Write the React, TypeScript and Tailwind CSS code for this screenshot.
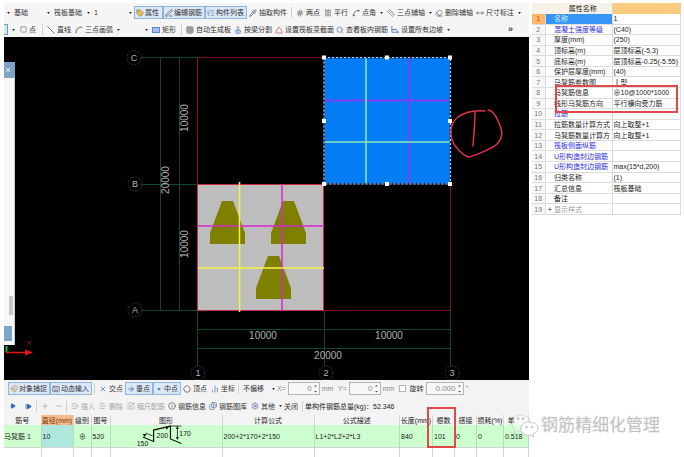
import React from 'react';
import clsx from 'clsx';
import {
  Tag, PenLine, ListTree, Pipette, Hash, Pause, Spline, Ruler, Eraser, MoveHorizontal, Slash,
  Grid3x3, Stamp, Triangle, Search, Square, Magnet, Keyboard, X, ArrowRight, Dot, Pentagon, ChartNoAxesColumn,
  Play, StepForward, Plus, Minus, ListPlus, ListMinus, Scaling, Info, Images, Settings,
} from 'lucide-react';

interface ToolProps {
  icon?: React.ReactNode;
  label?: string;
  width: string;
  active?: boolean;
  muted?: boolean;
  menu?: boolean;
}

const Caret: React.FC<{ className?: string }> = ({ className }) => (
  <svg viewBox="0 0 4 3" className={clsx('h-[2px] w-[3px] shrink-0', className)} aria-hidden="true">
    <path d="M0 0h4L2 3z" fill="#222" />
  </svg>
);

const Tool: React.FC<ToolProps> = ({ icon, label, width, active, muted, menu }) => (
  <button
    type="button"
    className={clsx(
      'flex h-[13px] shrink-0 items-center whitespace-nowrap',
      width,
      active ? 'gap-px border border-[#8fb4de] bg-[#dbe8f7] pl-px' : 'gap-[2px] pl-[2px]',
      muted ? 'text-[#a3a3a3]' : 'text-[#333]',
    )}
  >
    {icon}
    {label}
    {menu && <Caret className="ml-[2px]" />}
  </button>
);

const Picker: React.FC<{ label: string; value: string; width: string }> = ({ label, value, width }) => (
  <div className={clsx('relative flex shrink-0 items-center', width)}>
    <select aria-label={label} className="w-full appearance-none bg-transparent pl-[2px] leading-[13px] text-[#333] outline-none">
      {value && <option>{value}</option>}
    </select>
    <Caret className="pointer-events-none absolute right-[2px] top-[6px]" />
  </div>
);

const Spin: React.FC<{ label: string; value: string; width: string; unit: string; strong?: boolean }> = ({ label, value, width, unit, strong }) => (
  <label className="flex shrink-0 items-center gap-[2px] text-[#8a8a8a]">
    <span className={strong ? 'text-[#333]' : ''}>{label}</span>
    <span className={clsx('flex h-[13px] items-center border border-[#b5b5b5] bg-[#f7f7f7]', width)}>
      <input defaultValue={value} className="w-full min-w-0 bg-transparent text-right text-[8px] outline-none" />
      <svg viewBox="0 0 7 11" className="h-[11px] w-[7px] shrink-0" aria-hidden="true">
        <path d="M2 3.500h3L3.500 2zM2 8h3L3.500 9.500z" fill="#555" />
      </svg>
    </span>
    <span className="w-3">{unit}</span>
  </label>
);

const Divider = () => <span className="mx-[2px] h-[11px] w-px shrink-0 bg-[#d0d0d0]" />;

const ic = 'h-2 w-2 shrink-0';

const TopBars = () => (
  <div className="bg-[#f5f5f6]">
    <div className="flex h-[19px] items-center overflow-hidden">
      <Picker label="楼层" value="" width="w-2" />
      <Picker label="构件类型" value="基础" width="w-10" />
      <Picker label="构件" value="筏板基础" width="w-10" />
      <Picker label="编号" value="1" width="w-[42px]" />
      <Tool icon={<Tag className={clsx(ic, 'fill-[#e7c160] text-[#8c7a45]')} />} label="属性" width="w-[29px]" active />
      <Tool icon={<PenLine className={clsx(ic, 'text-[#444]')} />} label="编辑钢筋" width="w-[42px]" active />
      <Tool icon={<ListTree className={clsx(ic, 'text-[#6484b3]')} />} label="构件列表" width="w-[42px]" active />
      <Tool icon={<Pipette className={clsx(ic, 'text-[#3c5b82]')} />} label="抽取构件" width="w-[42px]" />
      <Divider />
      <Tool icon={<Hash className={clsx(ic, 'text-[#666]')} />} label="两点" width="w-[28px]" />
      <Tool icon={<Pause className={clsx(ic, 'text-[#666]')} />} label="平行" width="w-[28px]" />
      <Tool icon={<Spline className={clsx(ic, 'text-[#555]')} />} label="点角" width="w-[35px]" menu />
      <Tool icon={<Ruler className={clsx(ic, 'text-[#777]')} />} label="三点辅轴" width="w-[48px]" menu />
      <Tool icon={<Eraser className={clsx(ic, 'text-[#555]')} />} label="删除辅轴" width="w-[41px]" />
      <Tool icon={<MoveHorizontal className={clsx(ic, 'text-[#555]')} />} label="尺寸标注" width="w-[49px]" menu />
    </div>
    <div className="flex h-[15px] items-center overflow-hidden">
      <span className="h-[11px] w-[4px] shrink-0 border-y border-r border-[#6b9bd1] bg-[#dbe8f7]" />
      <Tool width="w-[10px]" menu />
      <Tool icon={<Square className="h-[7px] w-[7px] shrink-0 text-[#666]" />} label="点" width="w-[22px]" />
      <Divider />
      <Tool icon={<Slash className={clsx(ic, '-scale-x-100 text-[#333]')} />} label="直线" width="w-[28px]" />
      <Tool
        icon={
          <svg viewBox="0 0 9 9" className={ic} fill="none" stroke="#444" aria-hidden="true">
            <path d="M1 8C1 4 4 1 8 1.500" />
          </svg>
        }
        label="三点画弧"
        width="w-[46px]"
        menu
      />
      <Picker label="画弧方式" value="" width="w-[31px]" />
      <Tool icon={<span className="h-[6px] w-2 shrink-0 border border-[#5b86cf] bg-[#9fbff0]" />} label="矩形" width="w-[29px]" />
      <Divider />
      <Tool icon={<Grid3x3 className={clsx(ic, 'text-[#555]')} />} label="自动生成板" width="w-[48px]" />
      <Tool icon={<Stamp className={clsx(ic, 'text-[#4f76c0]')} />} label="按梁分割" width="w-[41px]" />
      <Tool icon={<Triangle className={clsx(ic, 'text-[#b05050]')} />} label="设置筏板变截面" width="w-[61px]" />
      <Tool icon={<Search className={clsx(ic, 'text-[#4b6a9c]')} />} label="查看板内钢筋" width="w-[55px]" />
      <Tool
        icon={
          <svg viewBox="0 0 9 9" className={ic} fill="none" stroke="#4f76c0" aria-hidden="true">
            <path d="M1 0v7h8M1 4h5l2 3" />
          </svg>
        }
        label="设置所有边坡"
        width="w-[62px]"
        menu
      />
      <button type="button" className="ml-auto mr-4 text-[9px] font-bold text-[#444]">»</button>
    </div>
  </div>
);

const slab = 'M0 43V32L12 0H23L35 32V43Z';

const handles = [
  [324, 57.5], [387, 57.5], [450, 57.5],
  [324, 121], [450, 121],
  [324, 184], [387, 184], [450, 184],
];

const axes = [
  { id: 'C', x: 134, y: 58 },
  { id: 'B', x: 135, y: 184 },
  { id: 'A', x: 135, y: 310 },
  { id: '1', x: 198, y: 373 },
  { id: '2', x: 326, y: 373 },
  { id: '3', x: 452, y: 373 },
];

const Drawing = () => (
  <svg viewBox="4 37 525 343" preserveAspectRatio="xMinYMin meet" className="block h-[343px] w-full bg-black font-['Liberation_Sans',sans-serif]">
    {/* grid and dimension lines */}
    <g stroke="#11492c" fill="none">
      <path d="M141 57.500H198M141 184.500H198M141 310.500H198" />
      <path d="M179.500 57V311M197.500 310V366M324.500 310V366M450.500 310V366M197 329.500H451M197 348.500H451" />
      <path d="M160.500 57V311" stroke="#2c3a30" />
    </g>
    <path d="M324 57.500H197.500V184M324 310.500H450.500V184" fill="none" stroke="#860f24" />

    {axes.map((a) => (
      <g key={a.id}>
        <circle cx={a.x} cy={a.y} r="7" fill="none" stroke="#1f3a26" strokeDasharray="2 1" />
        <text x={a.x} y={a.y + 3} textAnchor="middle" fontSize="9" fill="#b4b8b4">{a.id}</text>
      </g>
    ))}

    <g fontSize="10" fill="#b0b0b0" textAnchor="middle">
      <text x="263" y="339">10000</text>
      <text x="389" y="339">10000</text>
      <text x="328" y="359">20000</text>
      <text transform="translate(188 118) rotate(-90)">10000</text>
      <text transform="translate(169 180) rotate(-90)">20000</text>
      <text transform="translate(188 244) rotate(-90)">10000</text>
    </g>

    {/* lower left slab */}
    <rect x="197.500" y="184.500" width="126" height="126" fill="#bdbdbd" stroke="#c32a44" />
    <g fill="#7f8000">
      <path d={slab} transform="translate(210 201)" />
      <path d={slab} transform="translate(271 201)" />
      <path d={slab} transform="translate(256 256)" />
    </g>
    <g strokeWidth="1.500">
      <path d="M282 184V311M198 226H324" stroke="#d428d0" />
      <path d="M239.500 182V312M198 268H324" stroke="#f4f24a" />
    </g>

    {/* selected slab */}
    <rect x="324" y="57.500" width="126.500" height="126.500" fill="#057df5" />
    <path d="M409 58V184M324 100.500H450" stroke="#7b3ff0" strokeWidth="2" />
    <path d="M366 58V184M324 142H450" stroke="#8fe6b8" strokeWidth="1.500" />
    <rect x="324" y="57.500" width="126.500" height="126.500" fill="none" stroke="#10204a" strokeWidth="1.500" />
    <rect x="324" y="57.500" width="126.500" height="126.500" fill="none" stroke="#c3cdf0" strokeWidth="1.200" strokeDasharray="2 2" />
    {handles.map(([x, y]) => (
      <rect key={`${x}-${y}`} x={x - 2} y={y - 2} width="4" height="4" fill="#fff" />
    ))}

    {/* red pen mark */}
    <path
      d="M485 111C475 110 465 112 458 117C450 123 450 134 452 140C455 148 463 155 468 157C476 156 487 150 493 147C501 142 503 135 501 128C498 120 495 113 491 111L488 110M475 111C475 122 474 134 473 146"
      fill="none"
      stroke="#dc3448"
      strokeWidth="1.500"
      strokeLinecap="round"
    />

    {/* edge of the docked window */}
    <rect x="4" y="62" width="11" height="283" fill="#f4f6f8" />
    <rect x="4" y="62" width="11" height="16" fill="#7da3c6" />
    <path d="M6 68L10 72M10 68L6 72" stroke="#e8f2fb" />
    <path d="M14.500 78V345" stroke="#c9d2da" />
    <rect x="9" y="296" width="4" height="19" fill="#c4c6ca" />
    <rect x="4" y="326" width="8" height="15" fill="#7aa5c9" />

    {/* coordinate origin */}
    <path d="M6.500 346V352" stroke="#13c81f" strokeWidth="2" />
    <path d="M6 352.500H27" stroke="#e01414" strokeWidth="1.500" />
    <path d="M25 349.500L33 352.500L25 355.500Z" fill="#e01414" />
    <path d="M27 341L31 345M31 341L27 345" stroke="#7c1010" />
  </svg>
);

const BottomBars = () => (
  <div className="bg-[#f3f3f4]">
    <div className="flex h-[17px] items-center overflow-hidden">
      <Tool width="w-1" />
      <Tool icon={<Magnet className={clsx(ic, 'text-[#b98a3a]')} />} label="对象捕捉" width="w-[42px]" active />
      <Tool icon={<Keyboard className={clsx(ic, 'text-[#555]')} />} label="动态输入" width="w-[42px]" active />
      <Divider />
      <Tool icon={<X className={clsx(ic, 'text-[#2f5fb3]')} />} label="交点" width="w-[28px]" />
      <Tool icon={<ArrowRight className={clsx(ic, 'text-[#20529e]')} />} label="垂点" width="w-[28px]" active />
      <Tool icon={<Dot strokeWidth={6} className={clsx(ic, 'text-[#20529e]')} />} label="中点" width="w-[28px]" active />
      <Tool icon={<Pentagon className={clsx(ic, 'text-[#444]')} />} label="顶点" width="w-[28px]" />
      <Tool icon={<ChartNoAxesColumn className={clsx(ic, 'text-[#4668a0]')} />} label="坐标" width="w-[27px]" />
      <Divider />
      <Picker label="偏移方式" value="不偏移" width="w-[36px]" />
      <Spin label="X=" value="0" width="w-[32px]" unit="mm" />
      <span className="w-1 shrink-0" />
      <Spin label="Y=" value="0" width="w-[32px]" unit="mm" />
      <input type="checkbox" aria-label="启用旋转" className="mx-1 h-[7px] w-[7px] shrink-0 appearance-none border border-[#b5b5b5] bg-white" />
      <Spin label="旋转" value="0.000" width="w-[38px]" unit="°" strong />
    </div>
    <div className="flex h-[18px] items-center overflow-hidden">
      <span className="w-1 shrink-0" />
      <Tool icon={<Play className="h-[6px] w-[6px] fill-[#2f66b3] text-[#2f66b3]" />} width="w-[15px]" />
      <Tool icon={<StepForward className="h-[7px] w-[7px] fill-[#2f66b3] text-[#2f66b3]" />} width="w-[11px]" />
      <Divider />
      <Tool icon={<Plus className={ic} />} width="w-[14px]" muted />
      <Tool icon={<Minus className={ic} />} width="w-[11px]" muted />
      <Divider />
      <Tool icon={<ListPlus className={ic} />} label="插入" width="w-[28px]" muted />
      <Tool icon={<ListMinus className={ic} />} label="删除" width="w-[28px]" muted />
      <Tool icon={<Scaling className={ic} />} label="缩尺配筋" width="w-[41px]" muted />
      <Tool icon={<Info className={clsx(ic, 'text-[#555]')} />} label="钢筋信息" width="w-[41px]" />
      <Tool icon={<Images className={clsx(ic, 'text-[#4668a0]')} />} label="钢筋图库" width="w-[42px]" />
      <Tool icon={<Settings className={clsx(ic, 'text-[#4668a0]')} />} label="其他" width="w-[33px]" menu />
      <Tool label="关闭" width="w-[18px]" />
      <Divider />
      <span className="whitespace-nowrap text-[#222]">单构件钢筋总量(kg)：52.346</span>
    </div>
  </div>
);

const barColumns = [
  { title: '筋号', width: 'w-[37px]', value: '马凳筋 1' },
  { title: '直径(mm)', width: 'w-8', value: '10' },
  { title: '级别', width: 'w-[18px]', value: '⊕' },
  { title: '图号', width: 'w-[19px]', value: '520' },
  { title: '图形', width: 'w-28', value: '' },
  { title: '计算公式', width: 'w-[92px]', value: '200+2*170+2*150' },
  { title: '公式描述', width: '', value: 'L1+2*L2+2*L3' },
  { title: '长度(mm)', width: 'w-[33px]', value: '840' },
  { title: '根数', width: 'w-[22px]', value: '101' },
  { title: '搭接', width: 'w-[22px]', value: '0' },
  { title: '损耗(%)', width: 'w-[27px]', value: '0' },
  { title: '单 ° °', width: 'w-[25px]', value: '0.518' },
];

const BarShape = () => (
  <svg viewBox="110 425 112 22" className="block h-[22px] w-full overflow-visible" fill="none" stroke="#111" aria-hidden="true">
    <path d="M142 437L153 441.500V430L170 426V439L181 443.500" strokeWidth="1.200" />
    <path d="M152 436L145 433M170 426H181M177 427V439" strokeWidth="0.800" />
    <path d="M175.500 429L177 426L178.500 429ZM175.500 437L177 440L178.500 437ZM165 427L169 426L166 430ZM142 434L146 434L144 437Z" fill="#111" stroke="none" />
    <g fill="#111" stroke="none" fontSize="7">
      <text x="136" y="446">150</text>
      <text x="156" y="438">200</text>
      <text x="179" y="436">170</text>
    </g>
  </svg>
);

const BarTable = () => (
  <div className="relative">
    <table className="w-full table-fixed border-collapse text-[#222]">
      <thead>
        <tr className="h-[10px] bg-[#f4f4f4]">
          {barColumns.map((c, i) => (
            <th
              key={c.title}
              className={clsx('whitespace-nowrap border-r border-[#d5d5d5] p-0 font-normal', c.width, i === 1 && 'bg-[#f3b98a] text-[#7a3d12]')}
            >
              {c.title}
            </th>
          ))}
        </tr>
      </thead>
      <tbody>
        <tr className="h-[22px] bg-[#ccffcd]">
          {barColumns.map((c, i) => (
            <td
              key={c.title}
              className={clsx(
                'whitespace-nowrap border-r border-[#b7dcb9] p-0',
                i === 1 && 'border-l border-l-[#333] bg-[#aee8dc]',
                i === 2 && 'text-center',
                i !== 4 && i !== 0 && 'pl-px',
              )}
            >
              {i === 4 ? <BarShape /> : c.value}
            </td>
          ))}
        </tr>
        <tr className="h-[10px] bg-white">
          {barColumns.map((c, i) => (
            <td key={c.title} className={clsx('border-r border-t border-[#d5d5d5] p-0', i === 1 && 'border-l border-l-[#333]')} />
          ))}
        </tr>
      </tbody>
    </table>
    <div className="pointer-events-none absolute -top-2 right-[73px] h-[41px] w-[29px] border-2 border-[#e0474a]" />
  </div>
);

const properties = [
  { name: '名称', value: '1' },
  { name: '混凝土强度等级', value: '(C40)', link: true },
  { name: '厚度(mm)', value: '(250)' },
  { name: '顶标高(m)', value: '层顶标高(-5.3)' },
  { name: '底标高(m)', value: '层顶标高-0.25(-5.55)' },
  { name: '保护层厚度(mm)', value: '(40)' },
  { name: '马凳筋参数图', value: 'Ⅰ型' },
  { name: '马凳筋信息', value: '⊕10@1000*1000' },
  { name: '线形马凳筋方向', value: '平行横向受力筋' },
  { name: '拉筋', value: '', link: true },
  { name: '拉筋数量计算方式', value: '向上取整+1' },
  { name: '马凳筋数量计算方', value: '向上取整+1' },
  { name: '筏板侧面纵筋', value: '', link: true },
  { name: 'U形构造封边钢筋', value: '', link: true },
  { name: 'U形构造封边钢筋', value: 'max(15*d,200)', link: true },
  { name: '归类名称', value: '(1)' },
  { name: '汇总信息', value: '筏板基础' },
  { name: '备注', value: '' },
  { name: '显示样式', value: '', group: true },
];

const PropertyPanel = () => (
  <aside className="relative w-[152px] shrink-0 pr-[3px]">
    <table className="h-[212px] w-full table-fixed border-collapse text-[#222]">
      <thead>
        <tr className="h-[11px]">
          <th className="w-[13px] bg-[#f6f2ea] p-0" />
          <th className="w-[9px] bg-[#f6f2ea] p-0" />
          <th className="w-[58px] border-r border-[#d8d8d8] bg-[#f6f2ea] p-0 font-normal">属性名称</th>
          <th className="bg-[#fbcb80] p-0" aria-label="属性值" />
        </tr>
      </thead>
      <tbody>
        {properties.map((p, i) => (
          <tr key={i} className="border-b border-[#dcdcdc]">
            <td className={clsx('border-r border-[#dcdcdc] p-0 text-center', i === 0 ? 'bg-[#fbb765] text-[#c4442b]' : 'bg-[#f7f7f7] text-[#777]')}>{i + 1}</td>
            <td className={clsx('p-0 text-center', i === 0 && 'bg-[#3596f5]')}>{p.group && '+'}</td>
            <td
              className={clsx(
                'whitespace-nowrap border-r border-[#dcdcdc] p-0',
                i === 0 && 'bg-[#3596f5] text-[#d5ebff]',
                p.link && 'text-[#2a2ae0]',
                p.group && 'text-[#999]',
              )}
            >
              {p.name}
            </td>
            <td className="whitespace-nowrap border-r border-[#dcdcdc] p-0 pl-px">{p.value}</td>
          </tr>
        ))}
      </tbody>
    </table>
    <div className="pointer-events-none absolute left-[23px] right-[6px] top-[82px] h-[28px] border-2 border-[#e0474a]" />
  </aside>
);

const Watermark = () => (
  <div className="pointer-events-none absolute right-6 top-[414px] flex items-center gap-[2px]">
    <svg viewBox="0 0 28 24" className="h-6 w-7" fill="#fff" stroke="#c8c8c8" aria-hidden="true">
      <path d="M10 1C4 1 1 5 1 9c0 3 1 5 3 6l-1 4 4-2c6 1 12-2 12-8 0-5-4-8-9-8Z" fillOpacity="0.300" strokeOpacity="0.600" />
      <path d="M18 8c-5 0-8 3-8 7s4 7 9 6l4 2-1-3c3-1 5-3 5-6 0-3-4-6-9-6Z" />
      <circle cx="15.500" cy="13" r="0.800" fill="#999" />
      <circle cx="21" cy="13" r="0.800" fill="#999" />
    </svg>
    <span className="whitespace-nowrap text-[17px] leading-6 text-[#c2c2c2] [text-shadow:-1px_-1px_0_#f4f4f4]">钢筋精细化管理</span>
  </div>
);

const App: React.FC = () => (
  <div className="relative flex min-h-screen gap-[3px] overflow-hidden bg-white pl-1 pt-[3px] font-['Liberation_Sans','Noto_Sans_CJK_SC',sans-serif] text-[7px] leading-[9px]">
    <main className="min-w-0 flex-1">
      <TopBars />
      <Drawing />
      <BottomBars />
      <BarTable />
    </main>
    <PropertyPanel />
    <Watermark />
  </div>
);

export default App;
